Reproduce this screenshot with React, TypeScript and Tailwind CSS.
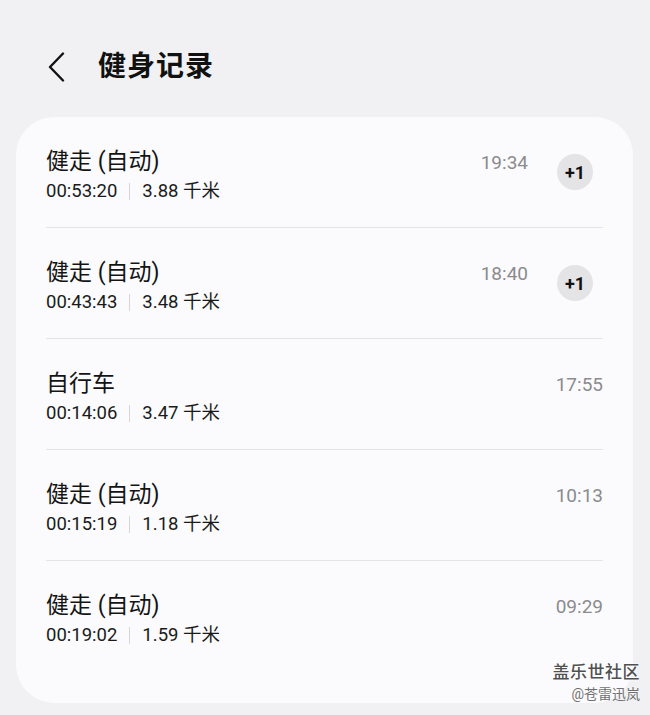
import React from 'react';

type Record = {
  name: string;
  duration: string;
  distance: string;
  time: string;
  extra?: number;
};

const records: Record[] = [
  { name: '健走 (自动)', duration: '00:53:20', distance: '3.88 千米', time: '19:34', extra: 1 },
  { name: '健走 (自动)', duration: '00:43:43', distance: '3.48 千米', time: '18:40', extra: 1 },
  { name: '自行车', duration: '00:14:06', distance: '3.47 千米', time: '17:55' },
  { name: '健走 (自动)', duration: '00:15:19', distance: '1.18 千米', time: '10:13' },
  { name: '健走 (自动)', duration: '00:19:02', distance: '1.59 千米', time: '09:29' },
];

const font = { fontFamily: "Roboto, 'Noto Sans CJK SC', sans-serif" };

const App: React.FC = () => {
  return (
    <div
      className="relative w-[650px] h-[715px] overflow-hidden bg-[#f1f1f4] text-[#111]"
      style={font}
    >
      {/* header */}
      <div className="flex items-center h-[117px] pt-[16px]">
        <button className="ml-[44px] w-[26px] h-[34px] flex items-center justify-center">
          <svg width="20" height="30" viewBox="0 0 20 30" fill="none">
            <path d="M16 1.5 L3 15 L16 28.5" stroke="#111" strokeWidth="2.4" strokeLinecap="round" strokeLinejoin="round" />
          </svg>
        </button>
        <h1 className="ml-[28px] text-[28px] font-bold tracking-[1px] leading-none">健身记录</h1>
      </div>

      {/* card */}
      <div className="mx-[16px] w-[617px] h-[586px] rounded-[38px] bg-[#fbfbfd] px-[30px]">
        {records.map((r, i) => (
          <div
            key={i}
            className={`flex h-[111px] ${i < records.length - 1 ? 'border-b border-[#e4e4e7]' : ''}`}
          >
            <div className="flex-1 pt-[30px]">
              <div className="text-[23px] leading-[29px] text-[#141414]">{r.name}</div>
              <div className="flex items-center mt-[3px] text-[18.5px] leading-[25px] text-[#1a1a1a]">
                <span>{r.duration}</span>
                <span className="mx-[12px] w-px h-[17px] bg-[#d6d6d9]" />
                <span>{r.distance}</span>
              </div>
            </div>
            <div className="flex pt-[33px]">
              <span className="text-[19px] leading-[25px] text-[#8b8b8e]">{r.time}</span>
              {r.extra ? (
                <span className="ml-[29px] mr-[10px] mt-[4px] w-[36px] h-[36px] rounded-full bg-[#e4e4e6] flex items-center justify-center text-[18px] font-bold text-[#111]">
                  +{r.extra}
                </span>
              ) : null}
            </div>
          </div>
        ))}
      </div>

      {/* watermark */}
      <div className="absolute right-[10px] bottom-[14px] flex flex-col items-end leading-none">
        <span
          className="text-[17px] font-medium tracking-[0.5px] text-[#505050]"
          style={{ textShadow: '0 0 2px #fff, 0 0 2px #fff' }}
        >
          盖乐世社区
        </span>
        <span
          className="mt-[6px] text-[14px] text-[#707070]"
          style={{ textShadow: '0 0 2px #fff' }}
        >
          @苍雷迅岚
        </span>
      </div>
    </div>
  );
};

export default App;
